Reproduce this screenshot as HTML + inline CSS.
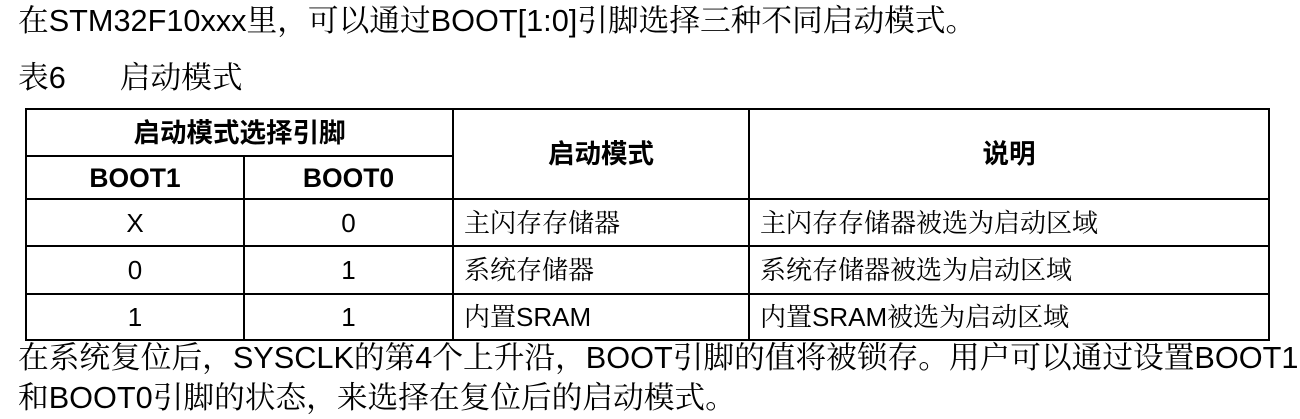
<!DOCTYPE html>
<html><head><meta charset="utf-8"><style>
body{margin:0;width:1300px;height:419px;background:#fff;position:relative;overflow:hidden;font-family:"Liberation Sans","Noto Serif CJK SC",serif;color:#000}
.t{position:absolute;left:18px;font-size:30.7px;white-space:nowrap;line-height:36px}
table{position:absolute;left:25px;top:108px;border-collapse:collapse;table-layout:fixed}
td{border:2px solid #000;text-align:center;font-size:26px;padding:0;line-height:28px;white-space:nowrap;overflow:hidden}
.h{font-family:"Liberation Sans","Noto Sans CJK SC",sans-serif;font-weight:bold;font-size:26.5px}
.l{text-align:left;padding-left:10px}
</style></head><body>
<div class="t" style="top:3px">在STM32F10xxx里，可以通过BOOT[1:0]引脚选择三种不同启动模式。</div>
<div class="t" style="top:60px">表6<span style="display:inline-block;width:54px"></span>启动模式</div>
<table>
<colgroup><col style="width:218px"><col style="width:209px"><col style="width:296px"><col style="width:520px"></colgroup>
<tr style="height:47px"><td colspan="2" class="h">启动模式选择引脚</td><td rowspan="2" class="h">启动模式</td><td rowspan="2" class="h">说明</td></tr>
<tr style="height:43px"><td class="h">BOOT1</td><td class="h">BOOT0</td></tr>
<tr style="height:47px"><td>X</td><td>0</td><td class="l">主闪存存储器</td><td class="l">主闪存存储器被选为启动区域</td></tr>
<tr style="height:48px"><td>0</td><td>1</td><td class="l">系统存储器</td><td class="l">系统存储器被选为启动区域</td></tr>
<tr style="height:46px"><td>1</td><td>1</td><td class="l">内置SRAM</td><td class="l">内置SRAM被选为启动区域</td></tr>
</table>
<div class="t" style="top:340px">在系统复位后，SYSCLK的第4个上升沿，BOOT引脚的值将被锁存。用户可以通过设置BOOT1</div>
<div class="t" style="top:380px">和BOOT0引脚的状态，来选择在复位后的启动模式。</div>
</body></html>
